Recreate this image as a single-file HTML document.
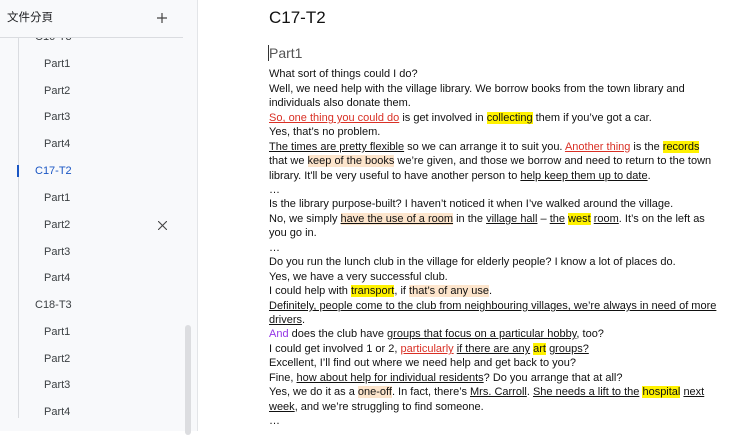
<!DOCTYPE html><html><head><meta charset="utf-8"><style>
body{margin:0;width:740px;height:431px;overflow:hidden;background:#fff;font-family:"Liberation Sans","Noto Sans CJK TC",sans-serif;position:relative}
#sb{position:absolute;left:0;top:0;width:197px;height:431px;background:#f8f9fb;border-right:1px solid #e3e5e8}
.s{position:absolute;font-size:11px;color:#3c4043;line-height:14px}
.p{left:44px}.c{left:35px}
#main{position:absolute;left:269px;top:0;font-size:11px;color:#111;white-space:nowrap}
.l{position:absolute;left:0;line-height:14px;top:1px}
u{text-decoration:underline;text-underline-offset:1px}
.r{color:#d93025}.y{background:#fff200}.o{background:#fde5cc}
</style></head><body>
<div id="sb">
<div class="s" style="left:7px;top:11px;font-size:11.5px;color:#202124">文件分頁</div>
<svg style="position:absolute;left:157px;top:13px" width="10" height="10"><path d="M5 0V10M0 5H10" stroke="#444" stroke-width="1.2"/></svg>
<div style="position:absolute;left:0;top:37px;width:183px;height:1px;background:#dadce0"></div>
<div style="position:absolute;left:18px;top:38px;width:1px;height:380px;background:#dadce0"></div>
<div class="s c" style="top:30px;clip-path:inset(8px 0 0 0)">C16-T3</div>
<div class="s p" style="top:57px">Part1</div>
<div class="s p" style="top:84px">Part2</div>
<div class="s p" style="top:110px">Part3</div>
<div class="s p" style="top:137px">Part4</div>
<div style="position:absolute;left:17px;top:165px;width:2px;height:12px;background:#1a56c4"></div>
<div class="s c" style="top:164px;color:#1a56c4">C17-T2</div>
<div class="s p" style="top:191px">Part1</div>
<div class="s p" style="top:218px">Part2</div>
<svg style="position:absolute;left:158px;top:221px" width="9" height="9"><path d="M0 0L9 9M9 0L0 9" stroke="#444" stroke-width="1.1"/></svg>
<div class="s p" style="top:245px">Part3</div>
<div class="s p" style="top:271px">Part4</div>
<div class="s c" style="top:298px">C18-T3</div>
<div class="s p" style="top:325px">Part1</div>
<div class="s p" style="top:352px">Part2</div>
<div class="s p" style="top:378px">Part3</div>
<div class="s p" style="top:405px">Part4</div>
<div style="position:absolute;left:185px;top:325px;width:6px;height:110px;border-radius:3px;background:#dcdde0"></div>
</div>
<div id="main">
<div class="l" style="top:8px;font-size:17px;line-height:20px">C17-T2</div>
<div class="l" style="top:44px;font-size:14px;line-height:18px;color:#555"><span style="border-left:1px solid #333;margin-left:-1px"></span>Part1</div>
<div class="l" style="top:67px">What sort of things could I do?</div>
<div class="l" style="top:82px">Well, we need help with the village library. We borrow books from the town library and</div>
<div class="l" style="top:96px">individuals also donate them.</div>
<div class="l" style="top:111px"><u class="r">So, one thing you could do</u> is get involved in <span class="y">collecting</span> them if you’ve got a car.</div>
<div class="l" style="top:125px">Yes, that’s no problem.</div>
<div class="l" style="top:140px"><u>The times are pretty flexible</u> so we can arrange it to suit you. <u class="r">Another thing</u> is the <span class="y">records</span></div>
<div class="l" style="top:154px">that we <span class="o">keep of the books</span> we’re given, and those we borrow and need to return to the town</div>
<div class="l" style="top:169px">library. It'll be very useful to have another person to <u>help keep them up to date</u>.</div>
<div class="l" style="top:183px">…</div>
<div class="l" style="top:197px">Is the library purpose-built? I haven’t noticed it when I’ve walked around the village.</div>
<div class="l" style="top:212px">No, we simply <u class="o">have the use of a room</u> in the <u>village hall</u> – <u>the</u> <span class="y">west</span> <u>room</u>. It’s on the left as</div>
<div class="l" style="top:226px">you go in.</div>
<div class="l" style="top:241px">…</div>
<div class="l" style="top:255px">Do you run the lunch club in the village for elderly people? I know a lot of places do.</div>
<div class="l" style="top:270px">Yes, we have a very successful club.</div>
<div class="l" style="top:284px">I could help with <span class="y">transport</span>, if <span class="o">that’s of any use</span>.</div>
<div class="l" style="top:299px"><u>Definitely, people come to the club from neighbouring villages, we’re always in need of more</u></div>
<div class="l" style="top:313px"><u>drivers</u>.</div>
<div class="l" style="top:327px"><span style="color:#9334e6">And</span> does the club have <u>groups that focus on a particular hobby</u>, too?</div>
<div class="l" style="top:342px">I could get involved 1 or 2, <u class="r">particularly</u> <u>if there are any</u> <span class="y">art</span> <u>groups?</u></div>
<div class="l" style="top:356px">Excellent, I’ll find out where we need help and get back to you?</div>
<div class="l" style="top:371px">Fine, <u>how about help for individual residents</u>? Do you arrange that at all?</div>
<div class="l" style="top:385px">Yes, we do it as a <span class="o">one-off</span>. In fact, there’s <u>Mrs. Carroll</u>. <u>She needs a lift to the</u> <span class="y">hospital</span> <u>next</u></div>
<div class="l" style="top:400px"><u>week</u>, and we’re struggling to find someone.</div>
<div class="l" style="top:414px">…</div>
</div>
</body></html>
